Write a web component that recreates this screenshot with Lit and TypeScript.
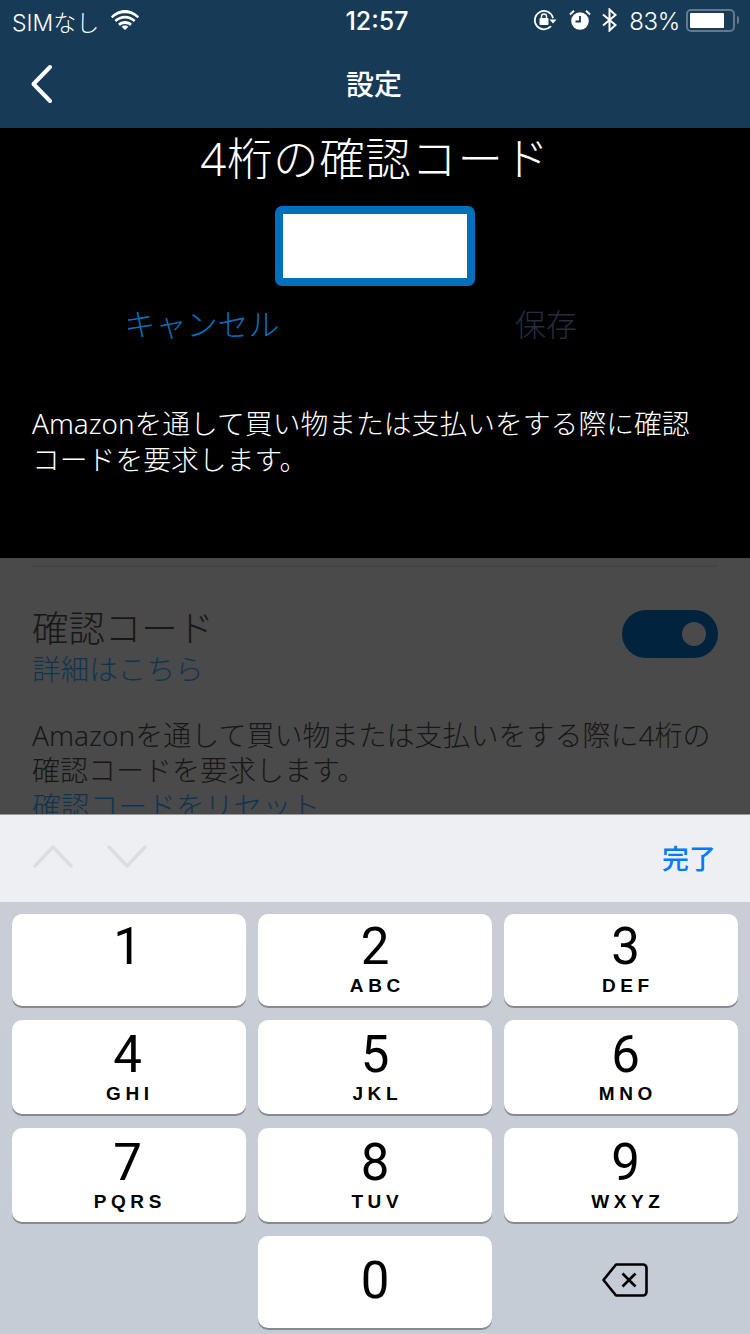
import { LitElement, html, css, svg } from "lit";
import { customElement } from "lit/decorators.js";

const KEYS: [string, string][][] = [
  [["1", ""], ["2", "ABC"], ["3", "DEF"]],
  [["4", "GHI"], ["5", "JKL"], ["6", "MNO"]],
  [["7", "PQRS"], ["8", "TUV"], ["9", "WXYZ"]],
];

@customElement("app-root")
export class AppRoot extends LitElement {
  static styles = css`
    :host {
      display: block;
      width: 750px;
      height: 1334px;
      overflow: hidden;
      font-family: "Noto Sans", "Noto Sans CJK JP", sans-serif;
      font-weight: 300;
      background: #000;
    }
    .top { height: 128px; background: #173a56; color: #fff; }
    .status {
      height: 40px;
      display: grid;
      grid-template-columns: 1fr auto 1fr;
      align-items: center;
      padding: 0 11px 0 12px;
      font-family: "Inter", "Noto Sans CJK JP", sans-serif;
    }
    .st-left { display: flex; align-items: center; gap: 12px; font-size: 23px; font-weight: 300; }
    .st-left span, .time, .pct { position: relative; top: 1px; }
    .time { font-size: 25px; font-weight: 500; margin-left: 3px; }
    .st-right { display: flex; align-items: center; justify-content: flex-end; font-size: 24px; font-weight: 300; }
    .st-right svg { display: block; flex: none; }
    .pct { margin: 0 6px 0 12px; letter-spacing: -0.3px; }
    .batt {
      width: 49px; height: 23px; box-sizing: border-box;
      border: 2px solid #64798b; border-radius: 5px; padding: 2px;
    }
    .batt div { width: 34px; height: 15px; background: #fff; border-radius: 1px; }
    .tip { width: 2px; height: 8px; background: #64798b; margin-left: 2px; border-radius: 0 2px 2px 0; }
    .nav { height: 88px; position: relative; display: flex; align-items: center; justify-content: center; padding: 0 2px 2px 0; box-sizing: border-box; }
    .nav .title { font-size: 28px; font-weight: 500; }
    .back { position: absolute; left: 30px; top: 24px; }
    .panel {
      height: 430px; box-sizing: border-box; background: #000; color: #fff;
      display: flex; flex-direction: column; align-items: center;
    }
    .h { font-size: 45.500px; line-height: 60px; letter-spacing: 0.6px; white-space: nowrap; }
    .input {
      width: 200px; height: 80px; box-sizing: border-box; margin-top: 18px;
      background: #fff; border: 8px solid #0070bb; border-radius: 7px;
    }
    .actions { width: 100%; display: flex; margin-top: 16px; font-size: 31px; line-height: 44px; }
    .actions span { flex: none; text-align: center; }
    .cancel { color: #0070bb; width: 404px; }
    .save { color: #232f3e; width: 284px; }
    .desc { align-self: stretch; margin: 59px 50px 0 32px; font-size: 27.800px; line-height: 36px; }
    .dim { height: 256px; overflow: hidden; box-sizing: border-box; background: #4a4a4a; padding: 7px 32px 0; color: #171717; }
    .rule { height: 2px; background: #444; }
    .row { display: flex; justify-content: space-between; margin-top: 43px; }
    .lab { font-size: 36.400px; line-height: 46px; margin-top: -5px; white-space: nowrap; }
    .link { color: #0d3552; font-size: 28.600px; line-height: 36px; white-space: nowrap; }
    .para .link { font-size: 28.800px; }
    .toggle { width: 96px; height: 48px; border-radius: 24px; background: #02233d; display: flex; align-items: center; justify-content: flex-end; padding-right: 12px; box-sizing: border-box; flex: none; }
    .toggle div { width: 24px; height: 24px; border-radius: 50%; background: #4a4a4a; }
    .para { font-size: 28px; line-height: 35px; margin-top: 31px; white-space: nowrap; }
    .tool {
      height: 88px; box-sizing: border-box; background: #eeeff2; border-top: 1px solid #999;
      display: flex; align-items: center; padding: 0 34px 5px 33px; gap: 34px;
    }
    .tool svg { display: block; }
    .done { margin: 3px 0 0 auto; color: #007aff; font-size: 27px; font-weight: 500; font-family: "Noto Sans CJK JP", sans-serif; }
    .kb {
      height: 432px; box-sizing: border-box; padding: 12px 12px 6px;
      background: linear-gradient(#cacdd5, #c5ccd6);
      display: grid; grid-template-columns: repeat(3, 234px); grid-template-rows: 92px 94px 94px 92px;
      column-gap: 12px; row-gap: 14px;
      font-family: "Roboto", "Liberation Sans", sans-serif; color: #000;
    }
    .key {
      background: #fff; border-radius: 10px; box-shadow: 0 2px 0 #87898c;
      display: flex; flex-direction: column; align-items: center; box-sizing: border-box;
      padding-top: 8px;
    }
    .first { padding-top: 6px; }
    .c0 { padding-right: 3px; }
    .c2 { padding-left: 9px; }
    .d { font-size: 51px; line-height: 54px; font-weight: 400; }
    .l { font-family: "Liberation Sans", sans-serif; font-size: 19px; line-height: 24px; font-weight: 700; letter-spacing: 4.600px; margin-right: -4.600px; }
    .zero { grid-column: 2; justify-content: center; padding-top: 0; padding-bottom: 2px; }
    .del { display: flex; align-items: center; justify-content: center; }
    .del svg { display: block; margin-left: 7px; margin-top: -4px; }
  `;

  private wifi() {
    return html`<svg width="28" height="20" viewBox="0 0 28 20" fill="#fff">
      <path d="M14 3.200c4.900 0 9.300 1.900 12.600 5.100l1.400-1.800C24.300 2.500 19.400 0 14 0S3.700 2.500 0 6.500l1.400 1.800C4.700 5.100 9.100 3.200 14 3.200z"/>
      <path d="M14 8.500c3.400 0 6.500 1.300 8.800 3.500l1.700-2C21.700 7.300 18 5.700 14 5.700S6.300 7.300 3.500 10l1.700 2c2.300-2.200 5.400-3.500 8.800-3.500z"/>
      <path d="M14 11c-2.700 0-5.100 1-6.900 2.700l1.900 2.200c1.300-1.200 3-1.900 5-1.900s3.700.7 5 1.900l1.900-2.200C19.100 12 16.700 11 14 11z"/>
      <path d="M14 15.400c-1.300 0-2.500.5-3.400 1.300L14 20l3.400-3.300c-.9-.8-2.100-1.300-3.400-1.300z"/>
    </svg>`;
  }

  private rotationLock() {
    return html`<svg width="24" height="22" viewBox="0 0 24 22" fill="none">
      <path d="M19.800 8.500A9.200 9.200 0 1 0 17.500 17.700" stroke="#fff" stroke-width="1.800" stroke-linecap="round"/>
      <path d="M16.500 10.500h7l-3.500 4z" fill="#fff"/>
      <rect x="6.500" y="9" width="9" height="7" rx="1" fill="#fff"/>
      <path d="M8.500 9.500V7.500a2.500 2.500 0 0 1 5 0v2" stroke="#fff" stroke-width="1.500"/>
    </svg>`;
  }

  private alarm() {
    return html`<svg width="22" height="22" viewBox="0 0 22 22" fill="none" style="margin-left:12px">
      <circle cx="11" cy="12" r="8.800" fill="#fff"/>
      <path d="M11 7v5.500H6.500" stroke="#173a56" stroke-width="1.800"/>
      <path d="M1 5.500 5 1.800M21 5.500 17 1.800" stroke="#fff" stroke-width="2"/>
    </svg>`;
  }

  private bluetooth() {
    return html`<svg width="15" height="24" viewBox="0 0 15 24" fill="none" style="margin-left:11px">
      <path d="M1 6.500 13.500 17 7.500 22.500V1.500L13.500 7 1 17.500" stroke="#fff" stroke-width="2"/>
    </svg>`;
  }

  private chevron(up: boolean) {
    const d = up ? "M2 22 20 3 38 22" : "M2 3 20 22 38 3";
    return html`<svg width="40" height="25" viewBox="0 0 40 25" fill="none">
      ${svg`<path d=${d} stroke="#dcdde0" stroke-width="3.500" stroke-linecap="round" stroke-linejoin="round"/>`}
    </svg>`;
  }

  render() {
    return html`
      <div class="top">
        <div class="status">
          <div class="st-left"><span>SIMなし</span>${this.wifi()}</div>
          <div class="time">12:57</div>
          <div class="st-right">
            ${this.rotationLock()}${this.alarm()}${this.bluetooth()}
            <span class="pct">83%</span>
            <div class="batt"><div></div></div><div class="tip"></div>
          </div>
        </div>
        <div class="nav">
          <svg class="back" width="24" height="40" viewBox="0 0 24 40" fill="none">
            <path d="M20 3 3.500 20 20 37" stroke="#fff" stroke-width="4" stroke-linecap="round" stroke-linejoin="round"/>
          </svg>
          <span class="title">設定</span>
        </div>
      </div>
      <div class="panel">
        <div class="h">4桁の確認コード</div>
        <div class="input"></div>
        <div class="actions"><span class="cancel">キャンセル</span><span class="save">保存</span></div>
        <div class="desc">Amazonを通して買い物または支払いをする際に確認コードを要求します。</div>
      </div>
      <div class="dim">
        <div class="rule"></div>
        <div class="row">
          <div>
            <div class="lab">確認コード</div>
            <div class="link">詳細はこちら</div>
          </div>
          <div class="toggle"><div></div></div>
        </div>
        <div class="para">Amazonを通して買い物または支払いをする際に4桁の<br />確認コードを要求します。<br /><span class="link">確認コードをリセット</span></div>
      </div>
      <div class="tool">
        ${this.chevron(true)}${this.chevron(false)}
        <span class="done">完了</span>
      </div>
      <div class="kb">
        ${KEYS.map((r, i) =>
          r.map(
            ([d, l], c) => html`<div class="key c${c} ${i === 0 ? "first" : ""}">
              <span class="d">${d}</span>${l ? html`<span class="l">${l}</span>` : ""}
            </div>`
          )
        )}
        <div class="key zero"><span class="d">0</span></div>
        <div class="del">
          <svg width="46" height="34" viewBox="0 0 46 34" fill="none">
            <path d="M14 1.500h27a3.500 3.500 0 0 1 3.500 3.500v24a3.500 3.500 0 0 1-3.500 3.500H14L1.500 17z" stroke="#000" stroke-width="2.600" stroke-linejoin="round"/>
            <path d="M20.500 10.500 33.500 23.500M33.500 10.500 20.500 23.500" stroke="#000" stroke-width="2.600"/>
          </svg>
        </div>
      </div>
    `;
  }
}
